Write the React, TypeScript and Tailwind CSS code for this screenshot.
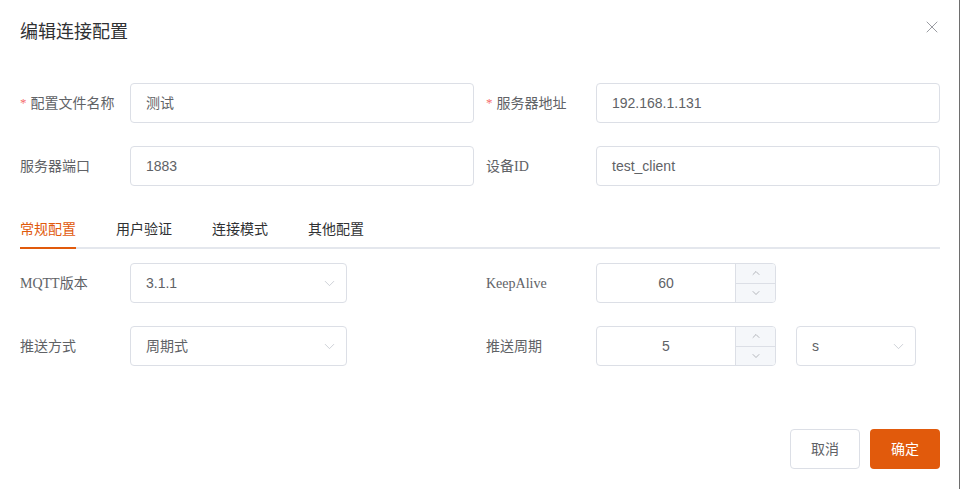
import { ChevronDown, ChevronUp, X } from "lucide-react";

const labelFont = "font-['Liberation_Serif','Noto_Sans_CJK_SC',serif]";
const sansFont = "font-['Liberation_Sans','Noto_Sans_CJK_SC',sans-serif]";

function Label({ text, required }: { text: string; required?: boolean }) {
  return (
    <div className={`w-[110px] shrink-0 text-[14px] text-[#606266] ${labelFont} flex items-center`}>
      {required && <span className="text-[#f56c6c] mr-[4px] text-[13px]">*</span>}
      {text}
    </div>
  );
}

function TextInput({ value }: { value: string }) {
  return (
    <div className={`flex-1 h-10 border border-[#dcdfe6] rounded-[4px] px-[15px] flex items-center text-[14px] text-[#606266] ${sansFont}`}>
      {value}
    </div>
  );
}

function Select({ value, width }: { value: string; width: string }) {
  return (
    <div className={`${width} h-10 border border-[#dcdfe6] rounded-[4px] pl-[15px] pr-[8px] flex items-center justify-between text-[14px] text-[#606266] ${sansFont}`}>
      <span>{value}</span>
      <ChevronDown size={17} strokeWidth={1.1} className="text-[#c0c4cc]" />
    </div>
  );
}

function NumberInput({ value }: { value: string }) {
  return (
    <div className={`w-[180px] h-10 border border-[#dcdfe6] rounded-[4px] flex text-[14px] text-[#606266] ${sansFont} overflow-hidden`}>
      <div className="flex-1 flex items-center justify-center">{value}</div>
      <div className="w-[40px] border-l border-[#dcdfe6] bg-[#f5f7fa] flex flex-col">
        <div className="flex-1 flex items-center justify-center border-b border-[#dcdfe6]">
          <ChevronUp size={12} strokeWidth={1.3} className="text-[#909399]" />
        </div>
        <div className="flex-1 flex items-center justify-center">
          <ChevronDown size={12} strokeWidth={1.3} className="text-[#909399]" />
        </div>
      </div>
    </div>
  );
}

const tabs = ["常规配置", "用户验证", "连接模式", "其他配置"];

export default function App() {
  return (
    <div className="w-[961px] h-[489px] bg-white overflow-hidden">
      <div className="w-[960px] h-[489px] border-r border-[#6e6e6e] pl-[20px] pr-[19px] pt-[20px] flex flex-col">
        <div className="flex items-center justify-between h-[24px]">
          <div className={`text-[18px] text-[#303133] ${sansFont}`}>编辑连接配置</div>
          <X size={20} strokeWidth={1.1} className="text-[#909399] -mr-[2px] -mt-[10px]" />
        </div>

        <div className="mt-[39px] grid grid-cols-2 gap-x-[12px] gap-y-[23px]">
          <div className="flex">
            <Label text="配置文件名称" required />
            <TextInput value="测试" />
          </div>
          <div className="flex">
            <Label text="服务器地址" required />
            <TextInput value="192.168.1.131" />
          </div>
          <div className="flex">
            <Label text="服务器端口" />
            <TextInput value="1883" />
          </div>
          <div className="flex">
            <Label text="设备ID" />
            <TextInput value="test_client" />
          </div>
        </div>

        <div className="mt-[23px] h-[40px] flex relative">
          <div className="absolute left-0 right-0 bottom-0 h-[2px] bg-[#e4e7ed]" />
          {tabs.map((t, i) => (
            <div
              key={t}
              className={`h-full flex items-center text-[14px] ${sansFont} ${i === 0 ? "pr-[20px]" : "px-[20px]"} ${i === 0 ? "text-[#e15a0c]" : "text-[#303133]"}`}
            >
              <div className="h-full flex items-center relative">
                {t}
                {i === 0 && <div className="absolute left-0 right-0 bottom-0 h-[2px] bg-[#e15a0c]" />}
              </div>
            </div>
          ))}
        </div>

        <div className="mt-[14px] grid grid-cols-2 gap-x-[12px] gap-y-[23px]">
          <div className="flex">
            <Label text="MQTT版本" />
            <Select value="3.1.1" width="w-[217px]" />
          </div>
          <div className="flex">
            <Label text="KeepAlive" />
            <NumberInput value="60" />
          </div>
          <div className="flex">
            <Label text="推送方式" />
            <Select value="周期式" width="w-[217px]" />
          </div>
          <div className="flex">
            <Label text="推送周期" />
            <NumberInput value="5" />
            <div className="ml-[20px]">
              <Select value="s" width="w-[120px]" />
            </div>
          </div>
        </div>

        <div className="mt-[63px] flex justify-end gap-[10px]">
          <button className={`w-[70px] h-10 border border-[#dcdfe6] rounded-[4px] text-[14px] text-[#606266] bg-white ${sansFont}`}>
            取消
          </button>
          <button className={`w-[70px] h-10 rounded-[4px] text-[14px] text-white bg-[#e15a0c] ${sansFont}`}>
            确定
          </button>
        </div>
      </div>
    </div>
  );
}
